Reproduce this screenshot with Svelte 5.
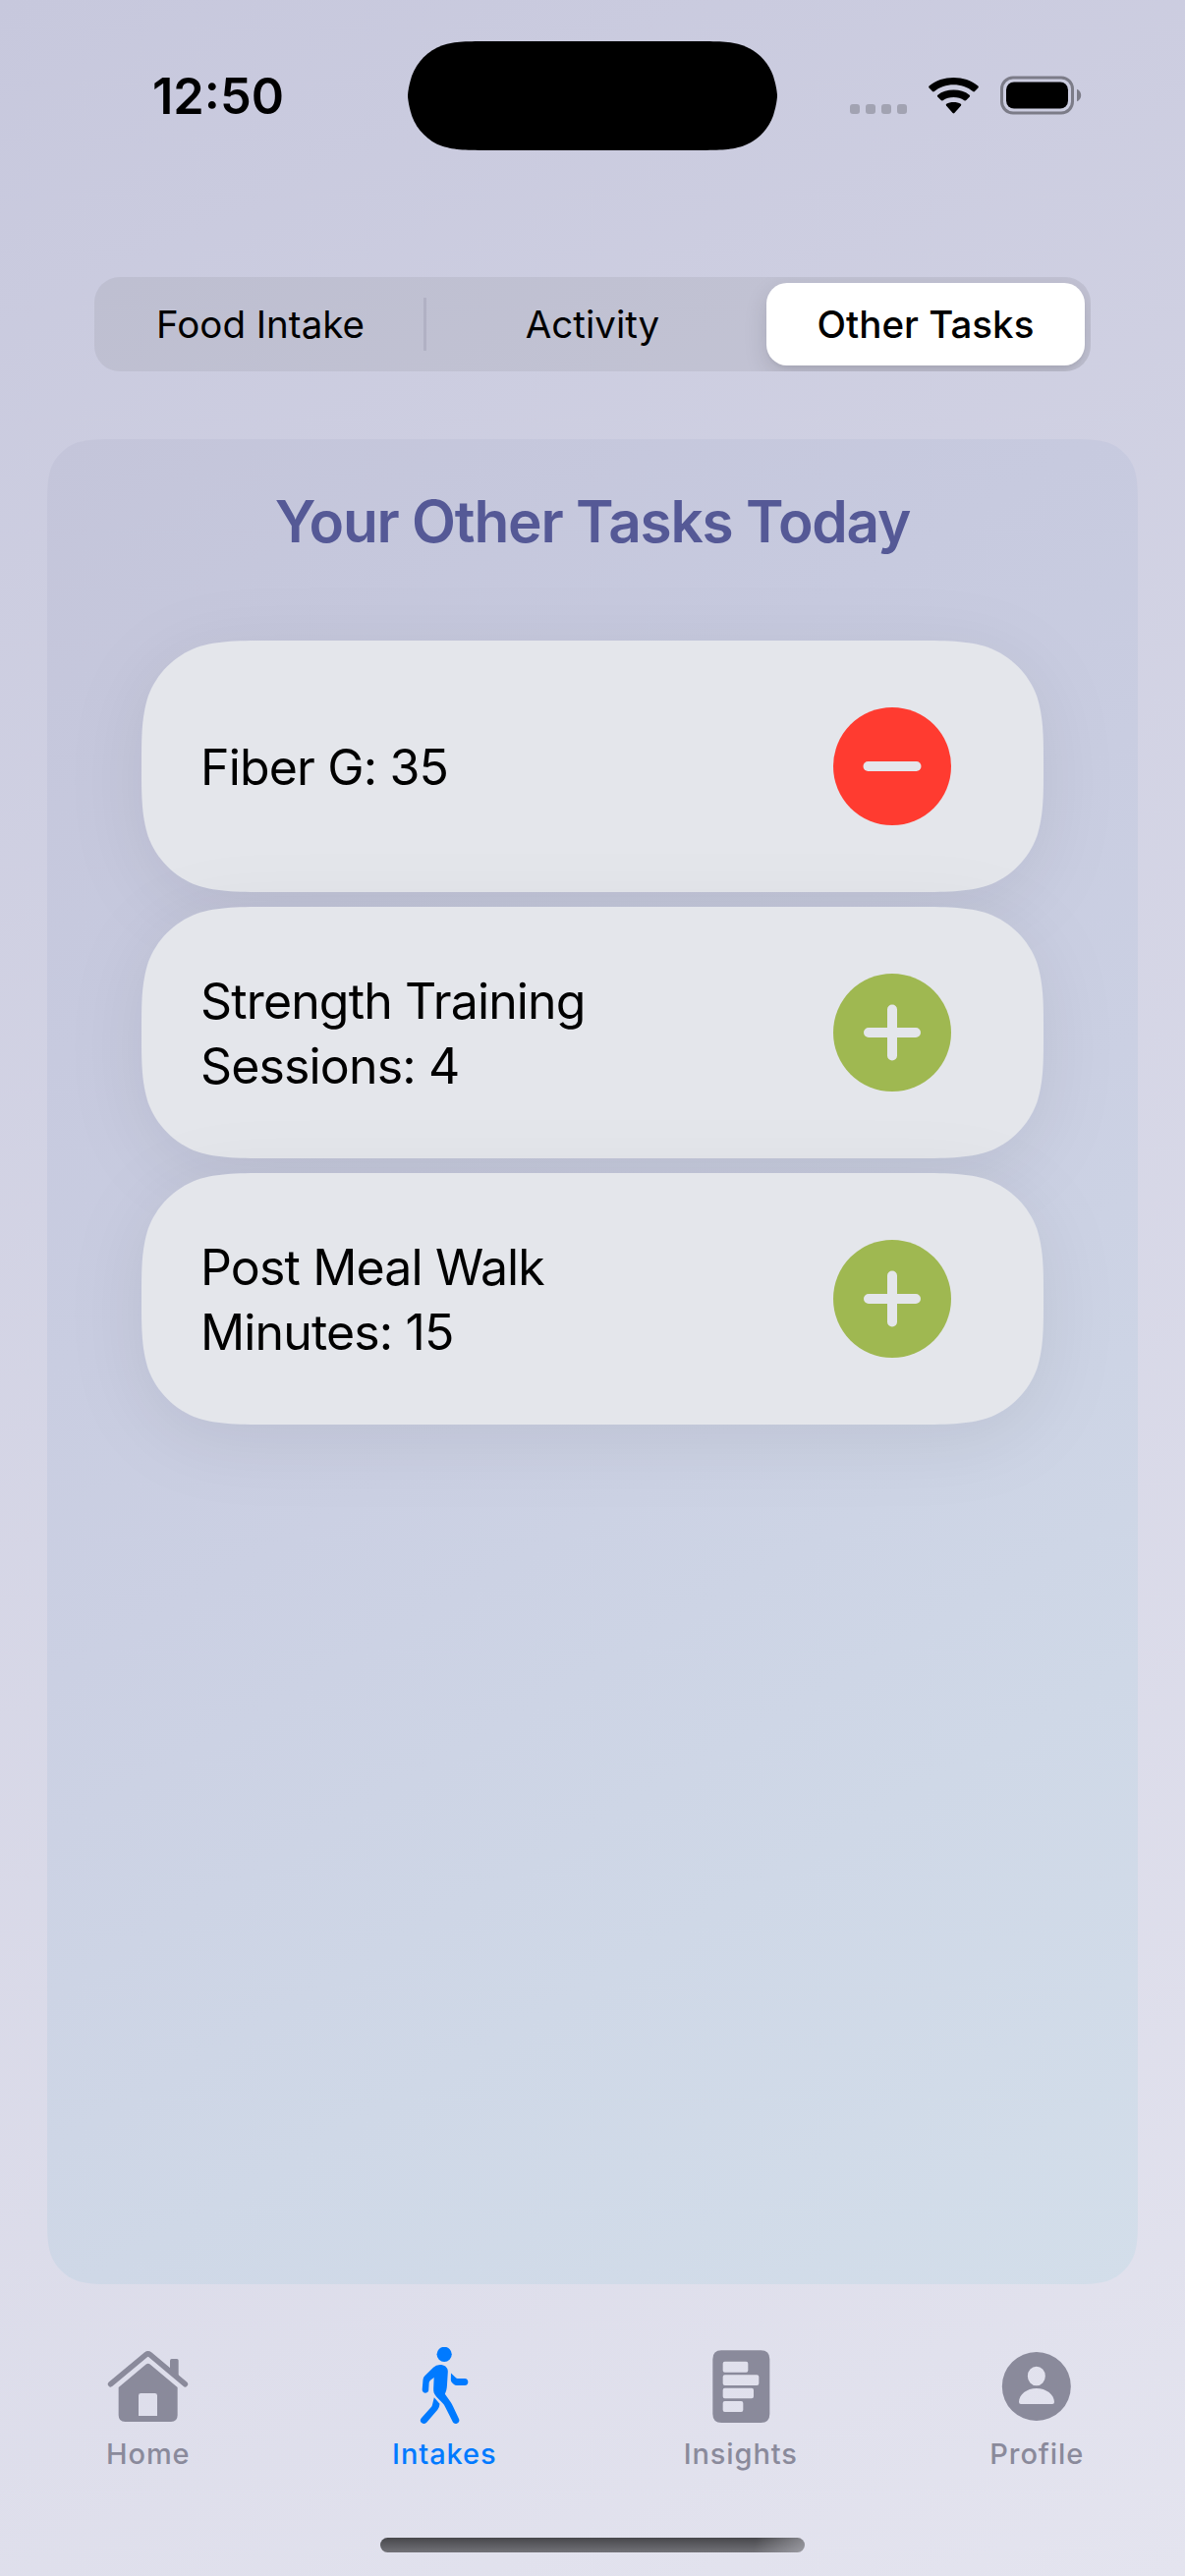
<script>
  const segments = ['Food Intake', 'Activity', 'Other Tasks'];
  const activeSegment = 'Other Tasks';

  const tasks = [
    { lines: ['Fiber G: 35'], done: true },
    { lines: ['Strength Training', 'Sessions: 4'], done: false },
    { lines: ['Post Meal Walk', 'Minutes: 15'], done: false }
  ];

  // Rounded rectangle with continuous-curvature corners.
  function squircle(w, h, r) {
    const ex = Math.min(1.5287 * r, w / 2);
    const ey = Math.min(1.5287 * r, h / 2);
    const sx = Math.min(1.0885 * r, ex);
    const sy = Math.min(1.0885 * r, ey);
    const a = 0.8684 * r;
    const b = 0.6315 * r;
    const c = 0.0749 * r;
    const d = 0.3728 * r;
    const e = 0.1691 * r;
    return [
      `M${ex} 0H${w - ex}`,
      `C${w - sx} 0 ${w - a} 0 ${w - b} ${c}C${w - d} ${e} ${w - e} ${d} ${w - c} ${b}C${w} ${a} ${w} ${sy} ${w} ${ey}`,
      `V${h - ey}`,
      `C${w} ${h - sy} ${w} ${h - a} ${w - c} ${h - b}C${w - e} ${h - d} ${w - d} ${h - e} ${w - b} ${h - c}C${w - a} ${h} ${w - sx} ${h} ${w - ex} ${h}`,
      `H${ex}`,
      `C${sx} ${h} ${a} ${h} ${b} ${h - c}C${d} ${h - e} ${e} ${h - d} ${c} ${h - b}C0 ${h - a} 0 ${h - sy} 0 ${h - ey}`,
      `V${ey}`,
      `C0 ${sy} 0 ${a} ${c} ${b}C${e} ${d} ${d} ${e} ${b} ${c}C${a} 0 ${sx} 0 ${ex} 0Z`
    ].join('');
  }

  function box(x, y, w, h, r) {
    return `M${x + r} ${y}h${w - 2 * r}q${r} 0 ${r} ${r}v${h - 2 * r}q0 ${r} ${-r} ${r}h${2 * r - w}q${-r} 0 ${-r} ${-r}v${2 * r - h}q0 ${-r} ${r} ${-r}z`;
  }

  const insightsPath = [
    box(195, 67, 174, 221, 27),
    box(226, 101, 77, 33, 6),
    box(226, 142, 110, 32, 6),
    box(226, 182, 94, 32, 6),
    box(226, 222, 62, 33, 6)
  ].join('');
</script>

<div class="screen">
  <header class="status">
    <div class="time">12:50</div>
    <svg class="island" viewBox="0 0 376 111"><path d={squircle(376, 111, 55.5)} /></svg>
    <div class="indicators">
      <svg width="58" height="40" viewBox="0 0 58 40" class="dots">
        <rect x="0" y="29" width="10" height="10" rx="3" />
        <rect x="16" y="29" width="10" height="10" rx="3" />
        <rect x="32" y="29" width="10" height="10" rx="3" />
        <rect x="48" y="29" width="10" height="10" rx="3" />
      </svg>
      <svg width="51" height="40" viewBox="0 0 51 40" class="wifi">
        <path d="M.6 12.4Q-.3 11.5 .6 10.6C7.500 4.700 16.200 2 25.500 2S43.500 4.700 50.400 10.600Q51.300 11.500 50.400 12.400L47 16Q46.100 16.900 45.100 16C39.700 11.600 32.900 9.300 25.500 9.300S11.300 11.600 5.900 16Q4.900 16.900 4 16Z" />
        <path d="M9.200 21.500Q8.400 20.600 9.300 19.700C13.800 16.200 19.400 14.600 25.500 14.600S37.200 16.200 41.700 19.700Q42.600 20.600 41.800 21.500L38.300 25.100Q37.400 26 36.400 25.200C33.300 23 29.600 21.900 25.500 21.900S17.700 23 14.600 25.200Q13.600 26 12.700 25.100Z" />
        <path d="M18 30.400Q17.300 29.500 18.200 28.700C20.200 27.400 22.600 26.900 25.500 26.900S30.800 27.400 32.800 28.700Q33.700 29.500 33 30.400L26.400 38Q25.500 38.900 24.600 38Z" />
      </svg>
      <svg width="83" height="40" viewBox="0 0 83 40" class="battery">
        <rect x="1.500" y="2" width="72" height="36" rx="11.500" fill="none" stroke="#7c7c88" stroke-width="3" />
        <rect x="6" y="6.500" width="63" height="27" rx="8" />
        <path d="M78 13.800c2.700 1 4.200 3.400 4.200 6.200s-1.500 5.200-4.200 6.200z" fill="#7c7c88" />
      </svg>
    </div>
  </header>

  <nav class="segmented">
    {#each segments as label, i}
      <button class="segment" class:active={label === activeSegment} class:divided={i === 0}>
        <span>{label}</span>
      </button>
    {/each}
  </nav>

  <main class="panel">
    <svg class="shape" viewBox="0 0 1110 1878">
      <defs>
        <linearGradient id="panelFill" gradientUnits="userSpaceOnUse" x1="0" y1="0" x2="1110" y2="1878">
          <stop offset="0" stop-color="#c4c5da" />
          <stop offset="0.25" stop-color="#c7cadf" />
          <stop offset="0.5" stop-color="#cbd0e3" />
          <stop offset="0.75" stop-color="#cfd8e7" />
          <stop offset="1" stop-color="#d3deea" />
        </linearGradient>
      </defs>
      <path d={squircle(1110, 1878, 48)} fill="url(#panelFill)" />
    </svg>
    <h1>Your Other Tasks Today</h1>
    <ul class="tasks">
      {#each tasks as task}
        <li class="card">
          <svg class="shape cast" viewBox="0 0 918 256"><path d={squircle(918, 256, 90)} fill="#e4e6eb" /></svg>
          <p>
            {#each task.lines as line}
              <span>{line}</span>
            {/each}
          </p>
          <button class="toggle" class:done={task.done} aria-label={task.done ? 'Remove' : 'Add'}>
            <svg viewBox="0 0 120 120">
              <circle cx="60" cy="60" r="60" />
              <path class="sign" d={task.done ? 'M35.500 60H84.500' : 'M36 60H84M60 36.500V83.500'} />
            </svg>
          </button>
        </li>
      {/each}
    </ul>
  </main>

  <nav class="tabs">
    <a class="tab" href="#home">
      <svg viewBox="81 57 264 240">
        <path d="M98 170L206 80Q212 75.500 218 80L325 170" fill="none" stroke="currentColor" stroke-width="17" stroke-linecap="round" />
        <path d="M279 128V98q0-5 5-5h16q5 0 5 5v54z" />
        <path fill-rule="evenodd" d="M206 109.500q6-4 12 0L302 180v85q0 20-20 20H142q-20 0-20-20V180zM183 267h57V205q0-7-7-7h-43q-7 0-7 7z" />
      </svg>
      <span>Home</span>
    </a>
    <a class="tab current" href="#intakes">
      <svg viewBox="985 57 264 240">
        <circle cx="1117.500" cy="79" r="22.800" />
        <path d="M1104 111C1118 111 1129 119 1128.500 132L1126 172C1125.500 186 1123 192 1119.500 200L1137 225Q1141 231 1144 238L1162 276C1168 288 1150 297 1143.500 286L1120 239Q1117 233 1113 229L1094 209C1086 201 1084 194 1084.500 184L1086 150L1075 158Q1071.500 161 1071 166L1069.500 189C1068 200 1050 200 1050 187L1052.500 157Q1053 150 1058 145L1084 119Q1092 111 1104 111Z" />
        <path d="M1138 136.500L1153 151Q1155 153 1158 153H1180C1193 153 1194 174 1180 174H1156Q1150 174 1146 170L1140.500 165Q1137 161 1137.500 156Z" />
        <path d="M1086.500 211L1103.500 230.500Q1103 241 1097 248L1063.500 287C1053 297 1038 285 1047.500 274L1077 241Q1080 238 1081 233Z" />
      </svg>
      <span>Intakes</span>
    </a>
    <a class="tab" href="#insights">
      <svg viewBox="149 57 264 240"><path fill-rule="evenodd" d={insightsPath} /></svg>
      <span>Insights</span>
    </a>
    <a class="tab" href="#profile">
      <svg viewBox="1053 57 264 240">
        <path fill-rule="evenodd" d="M1079.500 177a105 105 0 1 0 210 0a105 105 0 1 0-210 0zM1157.500 145.500a27 29.500 0 1 0 54 0a27 29.500 0 1 0-54 0zM1131 225C1131 202 1155 183 1184.500 183S1239 202 1239 225q0 6-6 6H1137q-6 0-6-6z" />
      </svg>
      <span>Profile</span>
    </a>
  </nav>

  <div class="home-indicator"></div>
</div>

<style>
  :global(body) {
    margin: 0;
  }

  .screen {
    box-sizing: border-box;
    width: 1206px;
    height: 2622px;
    display: flex;
    flex-direction: column;
    overflow: hidden;
    padding-top: 41.5px;
    background: linear-gradient(155.300deg, #c7c8dd 0%, #e4e4ef 100%);
    font-family: Inter, 'Liberation Sans', sans-serif;
    color: #000;
  }

  button {
    border: 0;
    padding: 0;
    background: none;
    font: inherit;
    color: inherit;
  }

  .status {
    display: grid;
    grid-template-columns: 415px 376px 415px;
    align-items: center;
    height: 111px;
    flex: none;
  }

  .time {
    padding: 1px 0 0 155px;
    font-size: 50.500px;
    font-weight: 600;
    line-height: 60px;
    letter-spacing: 0;
  }

  .island {
    width: 376px;
    height: 111px;
  }

  .indicators {
    display: flex;
    padding-left: 74px;
  }

  .dots {
    fill: #a2a3b2;
  }

  .wifi {
    margin-left: 22px;
  }

  .battery {
    margin-left: 22px;
  }

  .segmented {
    display: grid;
    grid-template-columns: repeat(3, 338px);
    flex: none;
    height: 96px;
    margin: 129.500px 96px 0;
    border-radius: 26px;
    background: rgba(118, 118, 128, 0.14);
  }

  .segment {
    display: flex;
    align-items: center;
    justify-content: center;
    font-size: 38.500px;
    letter-spacing: 0;
  }

  .segment.divided {
    background: linear-gradient(#b1b1c4, #b1b1c4) right center / 3px 54px no-repeat;
  }

  .segment.active {
    margin: 6px 6px 6px 8px;
    border-radius: 21px;
    background: #fff;
    font-weight: 500;
    box-shadow: 0 9px 24px rgba(0, 0, 0, 0.12), 0 3px 3px rgba(0, 0, 0, 0.04);
    clip-path: inset(-6px -6px -6px -60px round 26px);
  }

  .panel {
    position: relative;
    isolation: isolate;
    flex: none;
    height: 1878px;
    margin: 69px 48px 0;
  }

  .shape {
    position: absolute;
    inset: 0;
    z-index: -1;
    width: 100%;
    height: 100%;
    overflow: visible;
  }

  .cast {
    filter: drop-shadow(0 15px 38px rgba(0, 0, 0, 0.075));
  }

  h1 {
    margin: 0;
    padding-top: 48px;
    text-align: center;
    font-size: 58.500px;
    line-height: 72px;
    font-weight: 600;
    letter-spacing: -1.200px;
    color: #555996;
  }

  .tasks {
    display: flex;
    flex-direction: column;
    gap: 15px;
    margin: 85px 96px 0;
    padding: 0;
    list-style: none;
  }

  .card {
    position: relative;
    display: flex;
    align-items: center;
    justify-content: space-between;
    box-sizing: border-box;
    height: 256px;
    padding: 0 94px 0 60px;
  }

  .card p {
    display: flex;
    flex-direction: column;
    margin: 0;
    padding-top: 1px;
    font-size: 50px;
    line-height: 66px;
    letter-spacing: -0.850px;
    white-space: nowrap;
  }

  .toggle {
    width: 120px;
    height: 120px;
    color: #9fb851;
  }

  .toggle.done {
    color: #ff3b30;
  }

  .toggle svg {
    display: block;
    fill: currentColor;
  }

  .sign {
    fill: none;
    stroke: #e4e6eb;
    stroke-width: 10;
    stroke-linecap: round;
  }

  .tabs {
    display: grid;
    grid-template-columns: repeat(4, 1fr);
    flex: none;
    margin-top: 64px;
  }

  .tab {
    display: flex;
    flex-direction: column;
    align-items: center;
    color: #8a8a9b;
    text-decoration: none;
    font-size: 29px;
    font-weight: 500;
    line-height: 36px;
    letter-spacing: 0.900px;
  }

  .tab svg {
    width: 88px;
    height: 80px;
    margin-bottom: 11px;
    fill: currentColor;
  }

  .tab.current {
    color: #007aff;
  }

  .home-indicator {
    flex: none;
    width: 432px;
    height: 15px;
    margin: 67px auto 0;
    border-radius: 8px;
    background:
      linear-gradient(100deg, transparent 88%, rgba(190, 190, 198, 0.550) 100%),
      linear-gradient(#47474b, #727278);
  }
</style>
